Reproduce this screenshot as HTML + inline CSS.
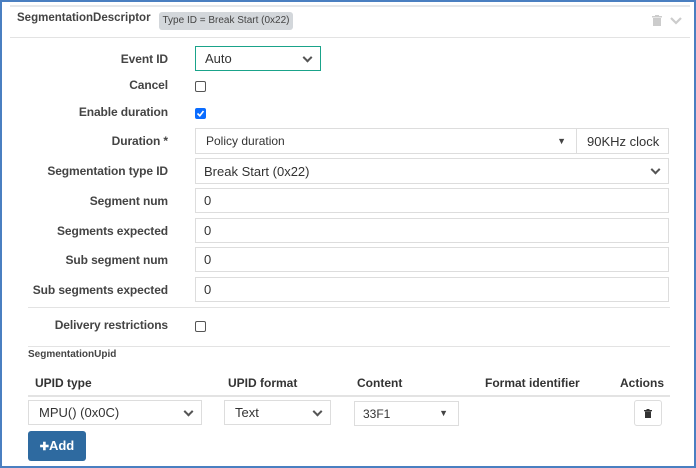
<!DOCTYPE html>
<html><head><style>
body{margin:0;width:696px;height:468px;overflow:hidden;background:#fff;font-family:"Liberation Sans",Arial,sans-serif;color:#333;position:relative}
.a{position:absolute}
.frame{left:0;top:0;width:692px;height:464px;border:2px solid #4a7fc1}
.lbl{font-size:12px;font-weight:bold;color:#444;text-align:right;width:160px;left:8px;letter-spacing:-0.1px}
.in{border:1px solid #ddd;background:#fff;font-size:13px;box-sizing:border-box;padding-left:8px;display:flex;align-items:center;color:#333}
.cb{width:11px;height:11px;border:1px solid #555;border-radius:2px;box-sizing:border-box}
.hr{height:1px;background:#e3e3e3}
.th{font-size:12px;font-weight:bold;color:#333}
.chev{position:absolute;right:9px;top:50%;width:5px;height:5px;border-right:2px solid #555;border-bottom:2px solid #555;transform:translateY(-70%) rotate(45deg)}
.tri{position:absolute;right:10px;font-size:9px;color:#444}
</style></head><body>
<div class="a frame"></div>
<div class="a" style="left:10px;top:5px;width:680px;height:2px;background:#e6e8ea"></div>
<div class="a" style="left:17px;top:12px;font-size:11.5px;font-weight:bold;color:#444">SegmentationDescriptor</div>
<div class="a" style="left:159px;top:12px;width:134px;height:18px;background:#d3d7db;border-radius:3px;font-size:10px;color:#444;text-align:center;line-height:18px">Type ID = Break Start (0x22)</div>
<svg class="a" style="left:652px;top:15px" width="10" height="11" viewBox="0 0 10 11"><rect x="0" y="1" width="10" height="1.5" fill="#ccc"/><rect x="3" y="0" width="4" height="1.5" fill="#ccc"/><rect x="1" y="3" width="8" height="8" fill="#ccc"/></svg>
<svg class="a" style="left:670px;top:17px" width="12" height="8"><path d="M1 1L6 6L11 1" stroke="#ccc" stroke-width="2.2" fill="none"/></svg>
<div class="a hr" style="left:10px;top:37px;width:680px"></div>

<div class="a lbl" style="top:52px">Event ID</div>
<div class="a in" style="left:195px;top:46px;width:126px;height:25px;border-color:#1aa38a;padding-left:9px">Auto<span class="chev"></span></div>
<div class="a lbl" style="top:78px">Cancel</div>
<div class="a cb" style="left:195px;top:81px"></div>
<div class="a lbl" style="top:105px">Enable duration</div>
<div class="a cb" style="left:195px;top:108px;background:#0a6cff;border-color:#0a6cff"><svg width="9" height="9" style="display:block"><path d="M1.5 4.5L3.8 6.8L7.5 2" stroke="#fff" stroke-width="1.6" fill="none"/></svg></div>
<div class="a lbl" style="top:134px">Duration *</div>
<div class="a in" style="left:195px;top:128px;width:382px;height:26px;font-size:12px;padding-left:10px">Policy duration<span class="tri" style="top:7px">▼</span></div>
<div class="a in" style="left:576px;top:128px;width:93px;height:26px;padding-left:10px">90KHz clock</div>
<div class="a lbl" style="top:164px">Segmentation type ID</div>
<div class="a in" style="left:195px;top:158px;width:474px;height:26px">Break Start (0x22)<span class="chev"></span></div>
<div class="a lbl" style="top:194px">Segment num</div>
<div class="a in" style="left:195px;top:188px;width:474px;height:25px">0</div>
<div class="a lbl" style="top:224px">Segments expected</div>
<div class="a in" style="left:195px;top:218px;width:474px;height:25px">0</div>
<div class="a lbl" style="top:253px">Sub segment num</div>
<div class="a in" style="left:195px;top:247px;width:474px;height:25px">0</div>
<div class="a lbl" style="top:283px">Sub segments expected</div>
<div class="a in" style="left:195px;top:277px;width:474px;height:25px">0</div>
<div class="a hr" style="left:28px;top:307px;width:642px"></div>
<div class="a lbl" style="top:318px">Delivery restrictions</div>
<div class="a cb" style="left:195px;top:321px"></div>
<div class="a hr" style="left:28px;top:346px;width:642px"></div>
<div class="a" style="left:28px;top:349px;font-size:10px;font-weight:bold;color:#444">SegmentationUpid</div>
<div class="a th" style="left:35px;top:376px">UPID type</div>
<div class="a th" style="left:228px;top:376px">UPID format</div>
<div class="a th" style="left:357px;top:376px">Content</div>
<div class="a th" style="left:485px;top:376px">Format identifier</div>
<div class="a th" style="left:620px;top:376px">Actions</div>
<div class="a" style="left:28px;top:395px;width:642px;height:2px;background:#e3e3e3"></div>
<div class="a in" style="left:28px;top:400px;width:174px;height:25px;padding-left:10px">MPU() (0x0C)<span class="chev"></span></div>
<div class="a in" style="left:224px;top:400px;width:107px;height:25px;padding-left:10px">Text<span class="chev"></span></div>
<div class="a in" style="left:354px;top:401px;width:105px;height:25px;font-size:12px">33F1<span class="tri" style="top:6px">▼</span></div>
<div class="a in" style="left:634px;top:400px;width:28px;height:26px;border-radius:3px;padding:0;justify-content:center"><svg width="8" height="9" viewBox="0 0 8 9"><rect x="0" y="1" width="8" height="1.3" fill="#333"/><rect x="2.5" y="0" width="3" height="1.3" fill="#333"/><rect x="1" y="2.5" width="6" height="6.5" fill="#333"/></svg></div>
<div class="a" style="left:28px;top:431px;width:58px;height:30px;background:#2e6aa0;border-radius:3px;color:#fff;font-size:13px;font-weight:bold;line-height:30px;text-align:center"><span style="font-size:11px">✚</span>Add</div>
</body></html>
